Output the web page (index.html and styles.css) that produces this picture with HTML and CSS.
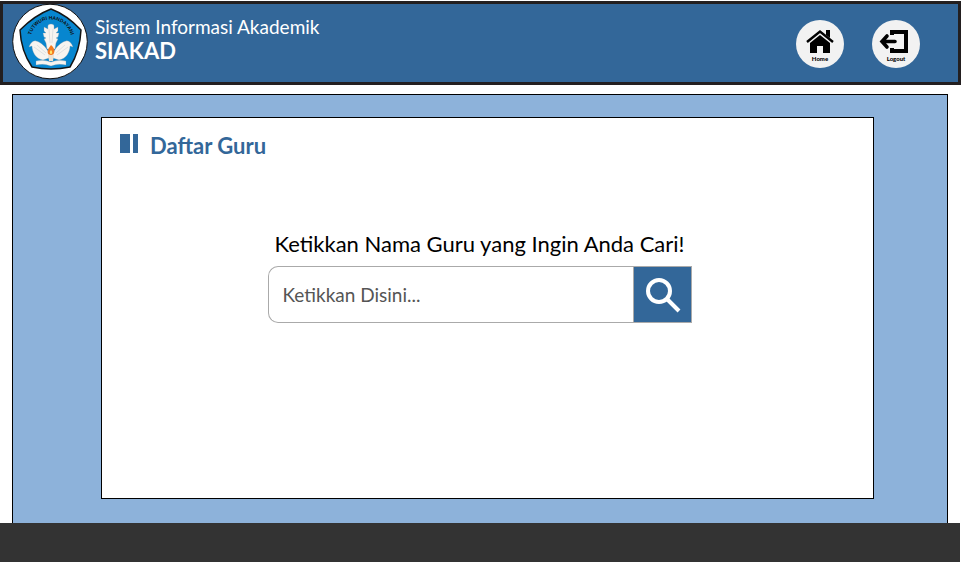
FILE: index.html
```html
<!DOCTYPE html>
<html lang="id">
<head>
<meta charset="utf-8">
<title>SIAKAD - Daftar Guru</title>
<link rel="stylesheet" href="styles.css">
</head>
<body>
<header class="topbar">
  <svg class="logo" viewBox="0 0 76 76" role="img" aria-label="Tut Wuri Handayani">
    <circle cx="38" cy="37.500" r="37.300" fill="#fff" stroke="#111" stroke-width="1"/>
    <path d="M39 5Q55 11 69 26Q68 47 58 63Q39 67 20 63Q9 47 8 26Q23 11 39 5Z" fill="#0786cf" stroke="#151515" stroke-width="1.500" stroke-linejoin="round"/>
    <path id="arc" d="M18 38A20.500 22 0 0 1 60 38" fill="none"/>
    <text class="logo-text" text-anchor="middle"><textPath href="#arc" startOffset="50%">TUTWURI HANDAYANI</textPath></text>
    <g fill="#f7f4f0" stroke="#8b9aa3" stroke-width=".3">
      <path d="M39 20C35 20 36 23 36 25L32 23 32 27 34 29 31 29 32 33 34 34 32 35 34 39 35 45H43L44 39 46 35 44 34 46 33 47 29 44 29 46 27 46 23 42 25C42 23 43 20 39 20Z"/>
      <path d="M37 49C34 43 29 38 24 37 21 36 18 40 17 43L20 42C20 48 24 55 31 56L37 54Z"/>
      <path d="M41 49C44 43 49 38 54 37 57 36 60 40 61 43L58 42C58 48 54 55 47 56L41 54Z"/>
      <path d="M24 57Q32 55 39 58 46 55 54 57V61Q46 59 39 62 32 59 24 61Z"/>
    </g>
    <path d="M37 25 38 39M41 25 40 39M22 43 33 51M25 41 34 49M56 43 45 51M53 41 44 49" stroke="#c5cdd1" stroke-width=".5"/>
    <path d="M36 50H42L41 57H37Z" fill="#eee3d2"/>
    <path d="M39 41C44 45 43 51 39 51S34 47 39 41Z" fill="#f47a20"/>
    <path d="M39 46C41 48 40 50 39 50S37 48 39 46Z" fill="#ffe66a"/>
  </svg>
  <div class="brand">
    <span class="brand-name">Sistem Informasi Akademik</span>
    <strong class="brand-short">SIAKAD</strong>
  </div>
  <nav class="actions">
    <a class="action" href="#">
      <svg viewBox="0 0 28 24" aria-hidden="true"><path d="M1 12 14 1.500 27 12" fill="none" stroke="#000" stroke-width="2.400"/><path d="M20 0H24V8L20 5ZM14 5 24 13V23H17V16H11V23H4V13Z"/></svg>
      <span>Home</span>
    </a>
    <a class="action" href="#">
      <svg viewBox="0 0 28 24" aria-hidden="true"><path d="M10 5V2H24V21H10V18" fill="none" stroke="#000" stroke-width="4"/><path d="M0 11.500H13M5 6 0 11.500 5 17" fill="none" stroke="#000" stroke-width="3.600" stroke-linecap="round"/></svg>
      <span>Logout</span>
    </a>
  </nav>
</header>
<main class="stage">
  <section class="card">
    <h1 class="title">Daftar Guru</h1>
    <form class="search">
      <label for="teacher">Ketikkan Nama Guru yang Ingin Anda Cari!</label>
      <div class="field">
        <input id="teacher" type="text" placeholder="Ketikkan Disini...">
        <button type="button" aria-label="Cari">
          <svg viewBox="0 0 36 36" aria-hidden="true"><circle cx="15" cy="14" r="11" fill="none" stroke="#fff" stroke-width="4"/><path d="M22 21 35 34" fill="none" stroke="#fff" stroke-width="4"/></svg>
        </button>
      </div>
    </form>
  </section>
</main>
<footer class="footer"></footer>
</body>
</html>
```
FILE: styles.css
```css
* { box-sizing: border-box; }

body {
  display: flex;
  flex-direction: column;
  min-height: 100vh;
  margin: 0;
  background: #fff;
  font-family: Lato, "Open Sans", sans-serif;
}

.topbar {
  display: flex;
  align-items: flex-start;
  height: 84px;
  margin: 1px 1px 0 0;
  padding: 0 38px 0 9px;
  border: 3px solid #231f20;
  background: #336799;
  color: #fff;
}

.logo { width: 76px; height: 76px; }

.logo-text {
  font: bold 5px "Liberation Sans", sans-serif;
  fill: #111;
}

.brand {
  display: flex;
  flex-direction: column;
  padding: 11px 0 0 7px;
  line-height: 24px;
}

.brand-name { font-size: 19px; }
.brand-short { font-size: 22px; }

.actions {
  display: flex;
  gap: 28px;
  margin: 16px 0 0 auto;
}

.action {
  display: flex;
  flex-direction: column;
  align-items: center;
  width: 48px;
  height: 48px;
  padding-top: 10px;
  border-radius: 50%;
  background: #f2f2f2;
  color: #000;
  font-size: 6px;
  font-weight: 900;
  line-height: 9px;
  text-decoration: none;
}

.action svg { width: 28px; height: 24px; overflow: visible; }

.stage {
  display: flex;
  flex: 1;
  margin: 9px 14px 0 12px;
  padding: 22px 73px 24px 88px;
  border: 1px solid #000;
  border-bottom: 0;
  background: #8db2da;
}

.card {
  flex: 1;
  padding: 16px 34px 16px 18px;
  border: 1px solid #000;
  background: #fff;
}

.title {
  display: flex;
  align-items: center;
  gap: 12px;
  margin: 0;
  color: #336799;
  font-size: 22px;
  line-height: 24px;
}

.title::before {
  content: "";
  width: 18px;
  height: 19px;
  margin-bottom: 5px;
  background: linear-gradient(90deg, #336799 10px, #fff 10px 13px, #336799 13px);
}

.search {
  width: 424px;
  max-width: 100%;
  margin: 71px auto 0;
}

.search label {
  display: block;
  margin-bottom: 7px;
  font-size: 22px;
  line-height: 30px;
  text-align: center;
}

.field { display: flex; height: 57px; }

.field input {
  flex: 1;
  min-width: 0;
  padding: 0 14px;
  border: 1px solid #aaa;
  border-right: 0;
  border-radius: 10px 0 0 10px;
  background: #fff;
  color: #333;
  font: 19px Lato, sans-serif;
}

.field input::placeholder { color: #555; opacity: 1; }

.field button {
  display: grid;
  place-items: center;
  width: 59px;
  padding: 0;
  border: 1px solid #aaa;
  background: #336799;
}

.field svg { width: 36px; height: 36px; overflow: visible; }

.footer {
  height: 39px;
  margin-right: 2px;
  background: #333;
}
```
